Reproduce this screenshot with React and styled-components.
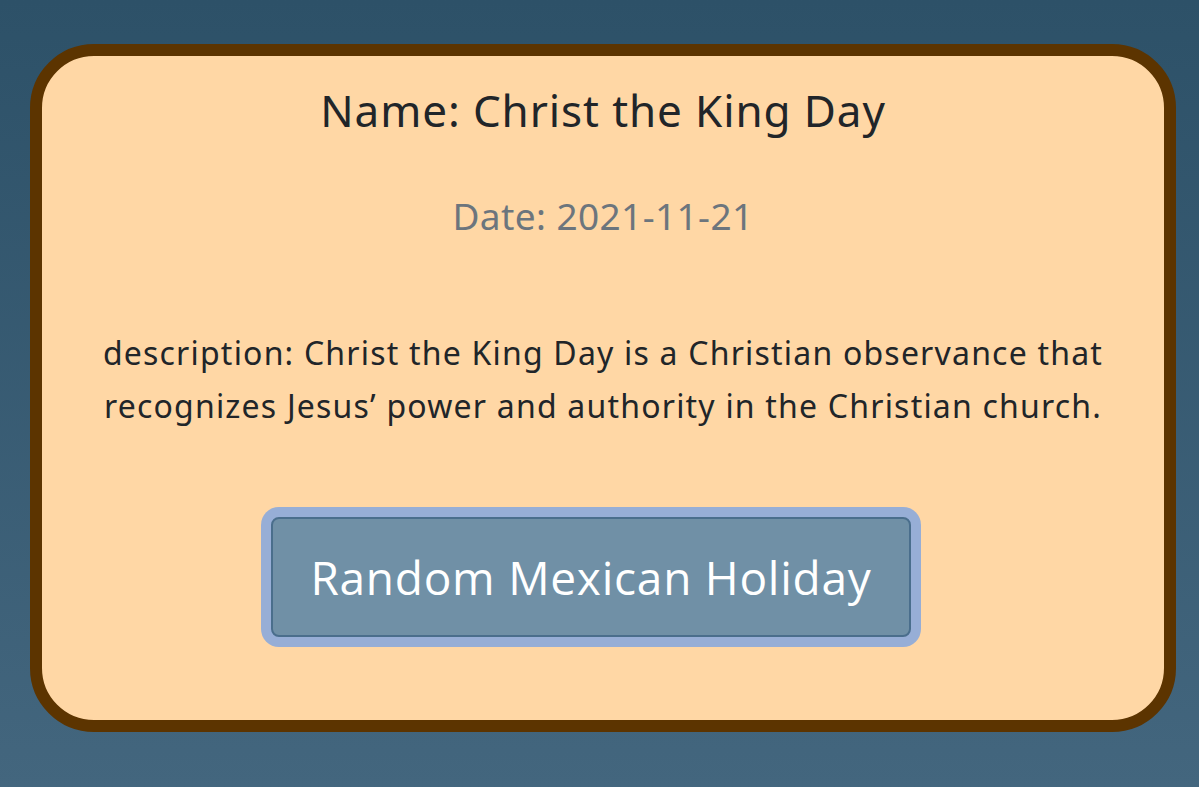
import React from "react";
import styled, { createGlobalStyle } from "styled-components";

const Global = createGlobalStyle`
  html, body { margin: 0; padding: 0; }
  body {
    min-height: 787px;
    background: linear-gradient(180deg, #2d5168 0%, #43667e 100%);
    font-family: "Comic Sans MS", "Noto Sans", sans-serif;
  }
`;

const Page = styled.main`
  box-sizing: border-box;
  min-height: 787px;
  padding: 44px 23px 0 30px;
`;

const Card = styled.section`
  box-sizing: border-box;
  width: 1146px;
  height: 688px;
  background: #ffd7a5;
  border: 12px solid #5c3400;
  border-radius: 64px;
  display: flex;
  flex-direction: column;
  align-items: center;
  padding: 30px 40px 0;
`;

const Title = styled.h1`
  margin: 0;
  font-size: 44px;
  letter-spacing: 0.9px;
  font-weight: 400;
  line-height: 48px;
  color: #212529;
`;

const DateLine = styled.h2`
  margin: 60px 0 0;
  font-size: 37px;
  letter-spacing: 0.4px;
  font-weight: 400;
  line-height: 44px;
  color: #6c757d;
`;

const Description = styled.p`
  margin: 88px 0 0;
  font-size: 32px;
  letter-spacing: 1.2px;
  line-height: 53px;
  color: #212529;
  text-align: center;
  white-space: nowrap;
`;

const Button = styled.button`
  margin: 85px 24px 0 0;
  width: 640px;
  height: 120px;
  box-sizing: border-box;
  background: #7090a6;
  border: 2px solid #4a6e8c;
  border-radius: 8px;
  box-shadow: 0 0 0 10px #97aed6;
  color: #ffffff;
  font-family: "Open Sans", "Noto Sans", sans-serif;
  font-size: 46px;
  letter-spacing: 0.75px;
  cursor: pointer;
`;

export default function App() {
  return (
    <>
      <Global />
      <Page>
        <Card>
          <Title>Name: Christ the King Day</Title>
          <DateLine>Date: 2021-11-21</DateLine>
          <Description>
            description: Christ the King Day is a Christian observance that
            <br />
            recognizes Jesus’ power and authority in the Christian church.
          </Description>
          <Button>Random Mexican Holiday</Button>
        </Card>
      </Page>
    </>
  );
}
